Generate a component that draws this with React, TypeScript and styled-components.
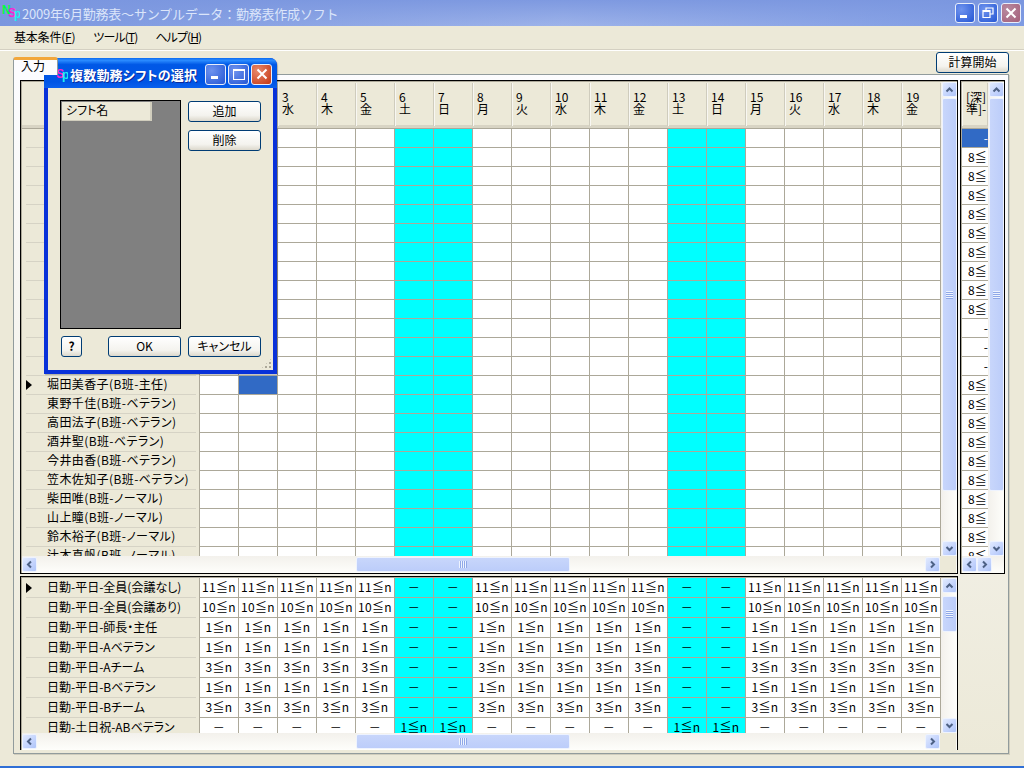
import { createGlobalStyle, styled } from "styled-components";

const GlobalStyle = createGlobalStyle`
  html, body {
    margin: 0;
    padding: 0;
    height: 100%;
    overflow: hidden;
  }
  body {
    font-family: "Noto Sans CJK JP", "Liberation Sans", sans-serif;
    font-size: 12px;
    font-feature-settings: "palt";
    color: #000;
    background: #ece9d8;
  }
  * {
    box-sizing: border-box;
  }
`;

const Screen = styled.div`
  width: 1024px;
  height: 768px;
  position: relative;
  display: flex;
  flex-direction: column;
  overflow: hidden;
  background: #ece9d8;
`;

const TitleBar = styled.div`
  height: 26px;
  flex: none;
  display: flex;
  align-items: center;
  padding: 0 3px 0 2px;
  background-image: linear-gradient(to bottom, rgba(122, 150, 223, 0.9), rgba(122, 150, 223, 0.2)),
    linear-gradient(to right, #7a96df, #a6baec 55%, #7f9ce4);
`;

const TitleText = styled.div`
  flex: 1;
  margin-left: 2px;
  font-size: 13px;
  font-feature-settings: normal;
  letter-spacing: -0.2px;
  color: #dbe5fa;
  white-space: nowrap;
`;

const CaptionButton = styled.div<{ $kind: "blue" | "close" | "mutedClose"; $gap?: number; $size?: number }>`
  width: ${(p) => p.$size ?? 20}px;
  height: ${(p) => p.$size ?? 20}px;
  flex: none;
  margin-left: ${(p) => p.$gap ?? 2}px;
  border: 1px solid #e8eefb;
  border-radius: 3px;
  display: flex;
  align-items: center;
  justify-content: center;
  background: ${(p) =>
    p.$kind === "blue"
      ? "radial-gradient(circle at 30% 30%, #6f93ee, #2f5fd8 85%)"
      : p.$kind === "close"
      ? "radial-gradient(circle at 30% 30%, #e98a6c, #c9421f 85%)"
      : "radial-gradient(circle at 30% 30%, #b88aa0, #a7657f 85%)"};
`;

const MenuBar = styled.div`
  height: 24px;
  flex: none;
  display: flex;
  align-items: center;
  padding: 0 0 3px 14px;
  gap: 18px;
  border-bottom: 1px solid #d4d0c2;
  box-shadow: 0 1px 0 #fff;
`;

const MenuItem = styled.div<{ $tight?: boolean }>`
  font-size: 12px;
  letter-spacing: ${(p) => (p.$tight ? "-0.9px" : "-0.2px")};
  u {
    text-underline-offset: 1px;
  }
`;

const Body = styled.div`
  flex: 1;
  display: flex;
  flex-direction: column;
  padding: 2px 15px 12px 13px;
`;

const TabStrip = styled.div`
  height: 22px;
  flex: none;
  display: flex;
  align-items: flex-end;
  justify-content: space-between;
`;

const Tab = styled.div`
  width: 45px;
  height: 18px;
  margin-bottom: -1px;
  padding: 0 0 0 7px;
  position: relative;
  z-index: 1;
  background: #fcfcfe;
  border-top: 3px solid #f2a73c;
  border-left: 1px solid #919b9c;
  border-right: 1px solid #919b9c;
  border-radius: 3px 3px 0 0;
  line-height: 12px;
`;

const StartButton = styled.button`
  align-self: flex-start;
  width: 73px;
  height: 21px;
  padding: 0 0 2px;
  font: inherit;
  border: 1px solid #003c74;
  border-radius: 3px;
  background: linear-gradient(to bottom, #fff, #f4f3ee 70%, #dcd8cc);
`;

const Panel = styled.div`
  flex: 1;
  display: flex;
  flex-direction: column;
  padding: 5px 3px 3px 6px;
  border: 1px solid #919b9c;
  background: linear-gradient(to bottom, #fcfcfe, #ece9d8);
  box-shadow: 1px 1px 0 #d0cdbd;
  gap: 2px;
`;

const TopRow = styled.div`
  display: flex;
  gap: 2px;
  height: 494px;
  flex: none;
`;

const Frame = styled.div<{ $width: number; $open?: boolean }>`
  width: ${(p) => p.$width}px;
  height: ${(p) => (p.$open ? "174px" : "auto")};
  flex: none;
  display: flex;
  flex-direction: column;
  border: 1px solid #000;
  border-bottom: ${(p) => (p.$open ? "none" : "1px solid #000")};
  padding: 1px 0 0 1px;
  background: #aca899;
  overflow: hidden;
`;

const GridMain = styled.div`
  flex: 1;
  min-height: 0;
  display: flex;
`;

const GridBody = styled.div`
  flex: 1;
  min-width: 0;
  overflow: hidden;
  background: #ece9d8;
`;

const HeaderRow = styled.div`
  height: 47px;
  display: flex;
  background: #ece9d8;
  border-bottom: 1px solid #aca899;
  box-shadow: inset 0 -3px 0 #d8d4c4;
`;

const CornerHead = styled.div`
  width: 178px;
  flex: none;
`;

const ColumnHead = styled.div<{ $width: number }>`
  width: ${(p) => p.$width}px;
  flex: none;
  height: 43px;
  margin-top: 1px;
  padding: 8px 0 0 3px;
  line-height: 12px;
  white-space: nowrap;
  overflow: hidden;
  border-right: 1px solid #cfccbd;
  border-left: 1px solid #f8f7f2;
`;

const Row = styled.div<{ $height: number }>`
  display: flex;
  height: ${(p) => p.$height}px;
`;

const RowHead = styled.div`
  width: 178px;
  flex: none;
  padding: 0 3px 0 4px;
  background: #ece9d8;
  border-right: 1px solid #aca899;
`;

const RowHeadInner = styled.div<{ $wide?: boolean }>`
  height: 100%;
  display: flex;
  align-items: center;
  padding-bottom: 3px;
  border-bottom: 1px solid #d6d3c5;
  white-space: nowrap;
  overflow: hidden;
  letter-spacing: ${(p) => (p.$wide ? "0.4px" : "0")};
`;

const ArrowSlot = styled.div`
  width: 21px;
  flex: none;
  display: flex;
  align-items: center;
  padding-top: 3px;
`;

const RowArrow = styled.div`
  width: 0;
  height: 0;
  border-top: 5px solid transparent;
  border-bottom: 5px solid transparent;
  border-left: 6px solid #000;
`;

const Cell = styled.div<{ $weekend?: boolean; $selected?: boolean }>`
  width: 39px;
  flex: none;
  display: flex;
  align-items: center;
  justify-content: center;
  padding-bottom: 3px;
  white-space: nowrap;
  letter-spacing: 0.3px;
  border-right: 1px solid #aca899;
  border-bottom: 1px solid #aca899;
  background: ${(p) => (p.$selected ? "#316ac5" : p.$weekend ? "#00ffff" : "#fff")};
`;

const SideCell = styled.div<{ $dash?: boolean; $selected?: boolean }>`
  width: 26px;
  height: 19px;
  padding: ${(p) => (p.$dash ? "0" : "0 0 0 6px")};
  line-height: 18px;
  overflow: hidden;
  white-space: nowrap;
  text-align: ${(p) => (p.$dash ? "right" : "left")};
  color: ${(p) => (p.$selected ? "#fff" : "#000")};
  border-bottom: 1px solid #aca899;
  background: ${(p) => (p.$selected ? "#316ac5" : "#fff")};
`;

const ScrollV = styled.div`
  width: 16px;
  flex: none;
  display: flex;
  flex-direction: column;
  align-items: center;
  background: linear-gradient(to right, #f3f1ec, #fefefb);
`;

const ScrollH = styled.div`
  height: 17px;
  flex: none;
  display: flex;
  align-items: center;
  padding-right: 1px;
  background: linear-gradient(to bottom, #f3f1ec, #fefefb);
`;

const ScrollButton = styled.div`
  width: 15px;
  height: 15px;
  flex: none;
  display: flex;
  align-items: center;
  justify-content: center;
  border: 1px solid #eef3fe;
  border-radius: 2px;
  background: linear-gradient(135deg, #e1eafe, #c3d3fd 60%, #aec4f8);
`;

const ScrollSpacer = styled.div`
  flex: 1;
`;

const ThumbV = styled.div<{ $top: number; $height: number }>`
  width: 15px;
  height: ${(p) => p.$height}px;
  margin-top: ${(p) => p.$top}px;
  flex: none;
  display: flex;
  align-items: center;
  justify-content: center;
  border: 1px solid #eef3fe;
  border-radius: 2px;
  background: linear-gradient(to right, #c8d6fb, #bccdfa);
`;

const ThumbH = styled.div<{ $left: number; $width: number }>`
  width: ${(p) => p.$width}px;
  height: 15px;
  margin-left: ${(p) => p.$left}px;
  flex: none;
  display: flex;
  align-items: center;
  justify-content: center;
  border: 1px solid #eef3fe;
  border-radius: 2px;
  background: linear-gradient(to bottom, #c8d6fb, #bccdfa);
`;

const GripV = styled.div`
  width: 7px;
  height: 8px;
  background: repeating-linear-gradient(to bottom, #eef3fe 0 1px, #8fa8e8 1px 2px);
`;

const GripH = styled.div`
  width: 8px;
  height: 7px;
  background: repeating-linear-gradient(to right, #eef3fe 0 1px, #8fa8e8 1px 2px);
`;

const Corner = styled.div`
  width: 16px;
  height: 17px;
  flex: none;
  background: #ece9d8;
`;

const BottomEdge = styled.div`
  height: 2px;
  flex: none;
  background: #2f6fd6;
`;

const Dialog = styled.div`
  position: absolute;
  left: 44px;
  top: 58px;
  width: 233px;
  height: 316px;
  display: flex;
  flex-direction: column;
  border-radius: 7px 7px 0 0;
  background: #0831d9;
  box-shadow: 1px 1px 1px rgba(0, 0, 0, 0.25);
`;

const DialogTitle = styled.div`
  height: 30px;
  flex: none;
  display: flex;
  align-items: center;
  padding: 2px 5px 0 6px;
  border-radius: 7px 7px 0 0;
  background: linear-gradient(to bottom, #0a6af0 0%, #2a8bff 8%, #0058e6 22%, #0055e5 80%, #0a60ee 100%);
`;

const DialogTitleText = styled.div`
  flex: 1;
  margin-left: 2px;
  font-size: 13px;
  font-weight: 700;
  letter-spacing: 0.2px;
  color: #fff;
  white-space: nowrap;
  text-shadow: 1px 1px 0 #0a2a9a;
`;

const DialogBody = styled.div`
  flex: 1;
  position: relative;
  margin: 0 4px 4px;
  padding: 12px 12px 0 12px;
  display: grid;
  grid-template-columns: 121px 73px;
  grid-template-rows: 229px 21px;
  column-gap: 7px;
  row-gap: 7px;
  background: #ece9d8;
`;

const ShiftList = styled.div`
  border: 1px solid #000;
  padding: 1px;
  background: #808080;
`;

const ShiftHead = styled.div`
  width: 90px;
  height: 19px;
  padding-left: 4px;
  line-height: 16px;
  background: #ece9d8;
  box-shadow: inset -2px -1px 0 #d0cdbd;
`;

const SideButtons = styled.div`
  display: flex;
  flex-direction: column;
  gap: 8px;
  padding-top: 1px;
`;

const XpButton = styled.button<{ $width?: number; $bold?: boolean }>`
  width: ${(p) => p.$width ?? 73}px;
  height: 21px;
  padding: 0 0 2px;
  flex: none;
  font: inherit;
  font-weight: ${(p) => (p.$bold ? 700 : 400)};
  border: 1px solid #003c74;
  border-radius: 3px;
  background: linear-gradient(to bottom, #fff, #f4f3ee 70%, #dcd8cc);
`;

const HelpCell = styled.div`
  display: flex;
  justify-content: space-between;
  padding-left: 1px;
`;

const SizeGrip = styled.div`
  position: absolute;
  right: 1px;
  bottom: 1px;
  width: 11px;
  height: 11px;
  background: radial-gradient(circle at 1px 1px, #aca899 1px, transparent 1.2px) 0 0 / 4px 4px;
  clip-path: polygon(100% 0, 100% 100%, 0 100%);
`;

const days = Array.from({ length: 19 }, (_, i) => i + 1);
const weekNames = ["月", "火", "水", "木", "金", "土", "日"];
const isWeekend = (d: number) => (d - 1) % 7 >= 5;

const staff: (string | null)[] = [
  ...Array.from({ length: 13 }, () => null),
  "堀田美香子(B班-主任)",
  "東野千佳(B班-ベテラン)",
  "高田法子(B班-ベテラン)",
  "酒井聖(B班-ベテラン)",
  "今井由香(B班-ベテラン)",
  "笠木佐知子(B班-ベテラン)",
  "柴田唯(B班-ノーマル)",
  "山上瞳(B班-ノーマル)",
  "鈴木裕子(B班-ノーマル)",
  "辻本真帆(B班-ノーマル)",
];

const needs = [
  { name: "日勤-平日-全員(会議なし)", value: "11≦n" },
  { name: "日勤-平日-全員(会議あり)", value: "10≦n" },
  { name: "日勤-平日-師長・主任", value: "1≦n" },
  { name: "日勤-平日-Aベテラン", value: "1≦n" },
  { name: "日勤-平日-Aチーム", value: "3≦n" },
  { name: "日勤-平日-Bベテラン", value: "1≦n" },
  { name: "日勤-平日-Bチーム", value: "3≦n" },
];

const Chevron = ({ dir }: { dir: "up" | "down" | "left" | "right" }) => {
  const points = {
    up: "1.5,6.5 4.5,3.5 7.5,6.5",
    down: "1.5,3 4.5,6 7.5,3",
    left: "6,1.5 3,4.5 6,7.5",
    right: "3,1.5 6,4.5 3,7.5",
  }[dir];
  return (
    <svg width="9" height="9" viewBox="0 0 9 9">
      <polyline points={points} fill="none" stroke="#4d6185" strokeWidth="2" />
    </svg>
  );
};

const AppIcon = () => (
  <svg width="18" height="20" viewBox="0 0 18 20" style={{ flex: "none" }}>
    <text x="0" y="11" fontSize="12" fontWeight="700" fill="#00ff40" fontFamily="Liberation Sans">N</text>
    <text x="6" y="14" fontSize="12" fontWeight="700" fill="#ff20d0" fontFamily="Liberation Sans">S</text>
    <text x="12" y="15" fontSize="12" fontWeight="700" fill="#20f0f0" fontFamily="Liberation Sans">p</text>
  </svg>
);

const MinGlyph = () => (
  <svg width="12" height="12" viewBox="0 0 12 12">
    <rect x="1" y="8" width="7" height="3" fill="#fff" />
  </svg>
);

const RestoreGlyph = () => (
  <svg width="12" height="12" viewBox="0 0 12 12">
    <path d="M4 3V1h7v6H8.5M1 3.5h7v7H1z M1 4.5h7" fill="none" stroke="#fff" strokeWidth="1.2" />
  </svg>
);

const MaxGlyph = () => (
  <svg width="12" height="12" viewBox="0 0 12 12">
    <path d="M.5 1.5h11v10H.5z M.5 2.5h11" fill="none" stroke="#fff" strokeWidth="1.2" />
  </svg>
);

const CloseGlyph = () => (
  <svg width="12" height="12" viewBox="0 0 12 12">
    <path d="M1.5 1.5l9 9M10.5 1.5l-9 9" fill="none" stroke="#fff" strokeWidth="2" />
  </svg>
);

const Vertical = ({ top, height }: { top: number; height: number }) => (
  <ScrollV>
    <ScrollButton>
      <Chevron dir="up" />
    </ScrollButton>
    <ThumbV $top={top} $height={height}>
      <GripV />
    </ThumbV>
    <ScrollSpacer />
    <ScrollButton>
      <Chevron dir="down" />
    </ScrollButton>
  </ScrollV>
);

const Horizontal = () => (
  <ScrollH>
    <ScrollButton>
      <Chevron dir="left" />
    </ScrollButton>
    <ThumbH $left={319} $width={214}>
      <GripH />
    </ThumbH>
    <ScrollSpacer />
    <ScrollButton>
      <Chevron dir="right" />
    </ScrollButton>
    <Corner />
  </ScrollH>
);

export default function App() {
  return (
    <>
      <GlobalStyle />
      <Screen>
        <TitleBar>
          <AppIcon />
          <TitleText>2009年6月勤務表～サンプルデータ：勤務表作成ソフト</TitleText>
          <CaptionButton $kind="blue">
            <MinGlyph />
          </CaptionButton>
          <CaptionButton $kind="blue" $gap={3}>
            <RestoreGlyph />
          </CaptionButton>
          <CaptionButton $kind="mutedClose" $gap={3}>
            <CloseGlyph />
          </CaptionButton>
        </TitleBar>
        <MenuBar>
          <MenuItem>
            基本条件(<u>F</u>)
          </MenuItem>
          <MenuItem $tight>
            ツール(<u>T</u>)
          </MenuItem>
          <MenuItem $tight>
            ヘルプ(<u>H</u>)
          </MenuItem>
        </MenuBar>
        <Body>
          <TabStrip>
            <Tab>入力</Tab>
            <StartButton>計算開始</StartButton>
          </TabStrip>
          <Panel>
            <TopRow>
              <Frame $width={938}>
                <GridMain>
                  <GridBody>
                    <HeaderRow>
                      <CornerHead />
                      {days.map((d) => (
                        <ColumnHead key={d} $width={39}>
                          {d}
                          <br />
                          {weekNames[(d - 1) % 7]}
                        </ColumnHead>
                      ))}
                    </HeaderRow>
                    {staff.map((name, i) => (
                      <Row key={i} $height={19}>
                        <RowHead>
                          <RowHeadInner $wide>
                            <ArrowSlot>{i === 13 && <RowArrow />}</ArrowSlot>
                            {name}
                          </RowHeadInner>
                        </RowHead>
                        {days.map((d) => (
                          <Cell key={d} $weekend={isWeekend(d)} $selected={i === 13 && d === 2} />
                        ))}
                      </Row>
                    ))}
                  </GridBody>
                  <Vertical top={1} height={393} />
                </GridMain>
                <Horizontal />
              </Frame>
              <Frame $width={45}>
                <GridMain>
                  <GridBody>
                    <HeaderRow>
                      <ColumnHead $width={26}>
                        [深]
                        <br />
                        準]-
                      </ColumnHead>
                    </HeaderRow>
                    {staff.map((_, i) => {
                      const dash = i === 0 || i === 10 || i === 11 || i === 12;
                      return (
                        <SideCell key={i} $dash={dash} $selected={i === 0}>
                          {dash ? "-" : "8≦"}
                        </SideCell>
                      );
                    })}
                  </GridBody>
                  <Vertical top={1} height={393} />
                </GridMain>
                <ScrollH>
                  <ScrollButton>
                    <Chevron dir="left" />
                  </ScrollButton>
                  <ScrollButton>
                    <Chevron dir="right" />
                  </ScrollButton>
                </ScrollH>
              </Frame>
            </TopRow>
            <Frame $width={938} $open>
              <GridMain>
                <GridBody>
                  {needs.map((need, i) => (
                    <Row key={need.name} $height={20}>
                      <RowHead>
                        <RowHeadInner>
                          <ArrowSlot>{i === 0 && <RowArrow />}</ArrowSlot>
                          {need.name}
                        </RowHeadInner>
                      </RowHead>
                      {days.map((d) => (
                        <Cell key={d} $weekend={isWeekend(d)}>
                          {isWeekend(d) ? "－" : need.value}
                        </Cell>
                      ))}
                    </Row>
                  ))}
                  <Row $height={20}>
                    <RowHead>
                      <RowHeadInner>
                        <ArrowSlot />
                        日勤-土日祝-ABベテラン
                      </RowHeadInner>
                    </RowHead>
                    {days.map((d) => (
                      <Cell key={d} $weekend={isWeekend(d)}>
                        {isWeekend(d) ? "1≦n" : "－"}
                      </Cell>
                    ))}
                  </Row>
                </GridBody>
                <Vertical top={3} height={36} />
              </GridMain>
              <Horizontal />
            </Frame>
          </Panel>
        </Body>
        <BottomEdge />
        <Dialog>
          <DialogTitle>
            <AppIcon />
            <DialogTitleText>複数勤務シフトの選択</DialogTitleText>
            <CaptionButton $kind="blue" $size={21}>
              <MinGlyph />
            </CaptionButton>
            <CaptionButton $kind="blue" $size={21}>
              <MaxGlyph />
            </CaptionButton>
            <CaptionButton $kind="close" $size={21}>
              <CloseGlyph />
            </CaptionButton>
          </DialogTitle>
          <DialogBody>
            <ShiftList>
              <ShiftHead>シフト名</ShiftHead>
            </ShiftList>
            <SideButtons>
              <XpButton>追加</XpButton>
              <XpButton>削除</XpButton>
            </SideButtons>
            <HelpCell>
              <XpButton $width={21} $bold>
                ?
              </XpButton>
              <XpButton>OK</XpButton>
            </HelpCell>
            <XpButton>キャンセル</XpButton>
            <SizeGrip />
          </DialogBody>
        </Dialog>
      </Screen>
    </>
  );
}
